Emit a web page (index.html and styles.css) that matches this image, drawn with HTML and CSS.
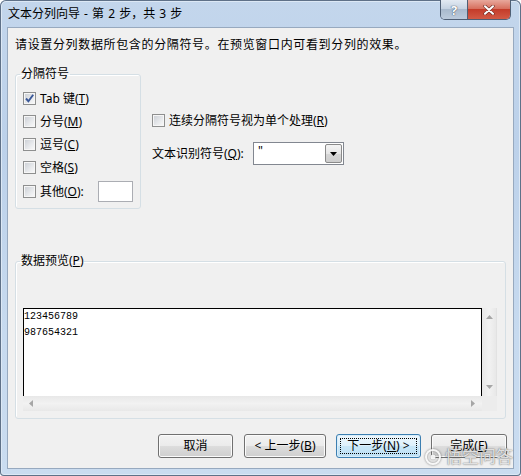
FILE: index.html
```html
<!DOCTYPE html>
<html lang="zh-CN">
<head>
<meta charset="utf-8">
<title>文本分列向导</title>
<link rel="stylesheet" href="styles.css">
</head>
<body>
<div class="window">
  <div class="titlebar">
    <span class="title">文本分列向导 - 第 2 步，共 3 步</span>
    <div class="caption">
      <span class="cap help">?</span>
      <span class="cap close"><svg width="12" height="10" viewBox="0 0 12 10"><path d="M2 1.2 L10 8.8 M10 1.2 L2 8.8" stroke="#6b2a22" stroke-width="3.2" stroke-linecap="round"/><path d="M2 1.2 L10 8.8 M10 1.2 L2 8.8" stroke="#fff" stroke-width="2" stroke-linecap="round"/></svg></span>
    </div>
  </div>
  <div class="client">
    <p class="intro">请设置分列数据所包含的分隔符号。在预览窗口内可看到分列的效果。</p>
    <div class="options">
      <fieldset class="group delim">
        <legend>分隔符号</legend>
        <div class="row"><span class="cb"><svg width="11" height="11" viewBox="0 0 11 11"><path d="M2 5.5 L4.4 8.2 L9.2 1.8" fill="none" stroke="#3a5898" stroke-width="1.9"/></svg></span><span>Tab 键(<u>T</u>)</span></div>
        <div class="row"><span class="cb"></span><span>分号(<u>M</u>)</span></div>
        <div class="row"><span class="cb"></span><span>逗号(<u>C</u>)</span></div>
        <div class="row"><span class="cb"></span><span>空格(<u>S</u>)</span></div>
        <div class="row other"><span class="cb"></span><span>其他(<u>O</u>):</span><span class="textbox"></span></div>
      </fieldset>
      <div class="side">
        <div class="row"><span class="cb"></span><span>连续分隔符号视为单个处理(<u>R</u>)</span></div>
        <div class="qualifier">
          <span class="qlabel">文本识别符号(<u>Q</u>):</span>
          <div class="combo"><span class="val">"</span><span class="drop"><svg width="7" height="4" viewBox="0 0 7 4"><polygon points="0,0 7,0 3.5,4" fill="#000"/></svg></span></div>
        </div>
      </div>
    </div>
    <fieldset class="group preview">
      <legend>数据预览(<u>P</u>)</legend>
      <div class="gridview">
        <div class="data">123456789<br>987654321</div>
        <div class="vscroll">
          <svg width="7" height="4" viewBox="0 0 7 4"><polygon points="3.5,0 7,4 0,4" fill="#a6a6a6"/></svg>
          <svg width="7" height="4" viewBox="0 0 7 4"><polygon points="0,0 7,0 3.5,4" fill="#a6a6a6"/></svg>
        </div>
        <div class="hscroll">
          <svg width="4" height="7" viewBox="0 0 4 7"><polygon points="4,0 4,7 0,3.5" fill="#a6a6a6"/></svg>
          <svg width="4" height="7" viewBox="0 0 4 7"><polygon points="0,0 4,3.5 0,7" fill="#a6a6a6"/></svg>
        </div>
        <div class="corner"></div>
      </div>
    </fieldset>
    <div class="buttons">
      <span class="btn w75 first">取消</span>
      <span class="btn w82">&lt; 上一步(<u>B</u>)</span>
      <span class="btn w85 default"><span class="focus">下一步(<u>N</u>) &gt;</span></span>
      <span class="btn w76">完成(<u>F</u>)</span>
    </div>
  </div>
  <div class="watermark"><svg width="18" height="18" viewBox="0 0 18 18"><circle cx="9" cy="9" r="7" fill="none" stroke="rgba(255,255,255,0.9)" stroke-width="2"/><circle cx="9" cy="9" r="2.5" fill="rgba(255,255,255,0.9)"/></svg><span>悟空问答</span></div>
</div>
</body>
</html>
```

FILE: styles.css
```css
* { box-sizing: border-box; }
html, body { margin: 0; padding: 0; }
body {
  width: 521px;
  height: 476px;
  overflow: hidden;
  font-family: "Noto Sans", "Noto Sans CJK SC", sans-serif;
  font-size: 12px;
  line-height: 16px;
  color: #000;
}
u { text-decoration: underline; text-underline-offset: 1px; }

.window {
  position: relative;
  width: 521px;
  height: 476px;
  display: flex;
  flex-direction: column;
  background: linear-gradient(to bottom, #c3d6ec 0%, #bcd1ea 30%, #c7daef 70%, #cadcf0 100%);
  border-radius: 6px 6px 4px 4px;
  box-shadow: inset 0 0 0 1px #5f7188, inset 0 0 0 2px #dce8f5;
}

.titlebar {
  height: 27px;
  display: flex;
  justify-content: space-between;
  align-items: flex-start;
  padding: 0 10px 0 8px;
}
.title {
  line-height: 28px;
  font-size: 12px;
  word-spacing: 1px;
}
.caption {
  display: flex;
  height: 20px;
  border: 1px solid #4f5f74;
  border-top: none;
  border-radius: 0 0 5px 5px;
  overflow: hidden;
}
.cap {
  display: flex;
  align-items: center;
  justify-content: center;
  height: 19px;
}
.help {
  width: 27px;
  border-right: 1px solid #4f5f74;
  background: linear-gradient(to bottom, #e3eaf2 0%, #c6d3e2 45%, #a9bacd 50%, #bccbdc 100%);
  color: #fff;
  font-weight: bold;
  font-size: 13px;
  text-shadow: 0 0 1px #3b4a5c, 0 0 1px #3b4a5c;
}
.close {
  width: 42px;
  background: linear-gradient(to bottom, #e8a89c 0%, #d7705f 45%, #c43c2a 50%, #d25a45 100%);
}

.client {
  flex: 1;
  margin: 0 7px 7px 7px;
  border: 1px solid #97a9bf;
  background: #f0f0f0;
  display: flex;
  flex-direction: column;
  padding: 9px 7px 0 7px;
}
.intro {
  margin: 0;
  letter-spacing: 0.65px;
  white-space: nowrap;
}

.options {
  display: flex;
  gap: 11px;
  margin-top: 13px;
}

.group {
  margin: 0;
  border: 1px solid #d5dfe5;
  border-radius: 3px;
  min-width: 0;
  box-shadow: inset 1px 1px 0 #fff;
}
.group legend {
  padding: 0 1px;
  margin-left: -3px;
  line-height: 16px;
}

.delim {
  width: 126px;
  padding: 5px 7px 4px 7px;
}

.row {
  display: flex;
  align-items: center;
  gap: 4px;
  height: 23px;
  white-space: nowrap;
}
.row.other { height: 25px; }

.cb {
  width: 13px;
  height: 13px;
  flex: none;
  border: 1px solid #8e8f8f;
  background: linear-gradient(135deg, #c9cdd3 0%, #e6e8eb 55%, #fbfbfb 100%);
  box-shadow: inset 0 0 0 1px #f6f6f6;
  display: flex;
  align-items: center;
  justify-content: center;
}
.cb svg { display: block; }

.textbox {
  width: 36px;
  height: 21px;
  margin-left: 10px;
  background: #fff;
  border: 1px solid #abadb3;
}

.side {
  padding-top: 43px;
  display: flex;
  flex-direction: column;
}
.qualifier {
  display: flex;
  align-items: center;
  margin-top: 10px;
  height: 23px;
}
.qlabel { width: 101px; white-space: nowrap; }
.combo {
  width: 91px;
  height: 23px;
  background: #fff;
  border: 1px solid #828790;
  display: flex;
  justify-content: space-between;
  padding: 1px;
}
.val {
  padding-left: 3px;
  line-height: 14px;
}
.drop {
  width: 17px;
  height: 19px;
  border: 1px solid #8a8a8a;
  border-radius: 2px;
  background: linear-gradient(to bottom, #f4f4f4 0%, #e6e6e6 50%, #d6d6d6 50%, #cdcdcd 100%);
  display: flex;
  align-items: center;
  justify-content: center;
}

.preview {
  margin-top: 44px;
  padding: 39px 7px 7px 7px;
}
.gridview {
  display: grid;
  grid-template-columns: 459px 15px;
  grid-template-rows: 88px 15px;
}
.data {
  background: #fff;
  border: 1px solid #000;
  border-bottom: none;
  font-family: "Liberation Mono", "DejaVu Sans Mono", monospace;
  font-size: 10px;
  line-height: 16px;
  padding-left: 0;
}
.vscroll {
  background: linear-gradient(to right, #e8e8e8, #f2f2f2 50%, #e8e8e8);
  border-right: 1px solid #e2e2e2;
  display: flex;
  flex-direction: column;
  justify-content: space-between;
  align-items: center;
  padding: 7px 0 7px 0;
}
.hscroll {
  background: linear-gradient(to bottom, #e8e8e8, #f2f2f2 50%, #e8e8e8);
  display: flex;
  justify-content: space-between;
  align-items: center;
  padding: 0 7px 0 6px;
}
.corner { background: #ececec; }

.buttons {
  display: flex;
  justify-content: flex-end;
  gap: 10px;
  margin-top: 15px;
  margin-right: -1px;
}
.btn {
  height: 24px;
  display: flex;
  align-items: center;
  justify-content: center;
  border: 1px solid #707070;
  border-radius: 3px;
  background: linear-gradient(to bottom, #f2f2f2 0%, #ebebeb 50%, #dddddd 50%, #cfcfcf 100%);
  box-shadow: inset 0 0 0 1px #fbfbfb;
  white-space: nowrap;
}
.btn.first { margin-right: 1px; }
.w75 { width: 75px; }
.w76 { width: 76px; }
.w82 { width: 82px; }
.w85 { width: 85px; }
.btn.default {
  border-color: #3c7fb1;
  background: linear-gradient(to bottom, #eef7fd 0%, #ddf0fb 50%, #c9e7f8 50%, #bde0f5 100%);
  box-shadow: inset 0 0 0 1px #d8ecf9;
  padding: 3px;
}
.focus {
  flex: 1;
  height: 100%;
  display: flex;
  align-items: center;
  justify-content: center;
  border: 1px dotted #000;
}

.watermark {
  position: absolute;
  right: 8px;
  bottom: 9px;
  display: flex;
  align-items: center;
  gap: 3px;
  color: rgba(255, 255, 255, 0.8);
  font-size: 17px;
  line-height: 20px;
  text-shadow: 0 0 1px rgba(60, 60, 60, 0.7), 0 0 2px rgba(60, 60, 60, 0.4);
  pointer-events: none;
}
.watermark svg { filter: drop-shadow(0 0 1px rgba(60,60,60,0.7)); }
```
